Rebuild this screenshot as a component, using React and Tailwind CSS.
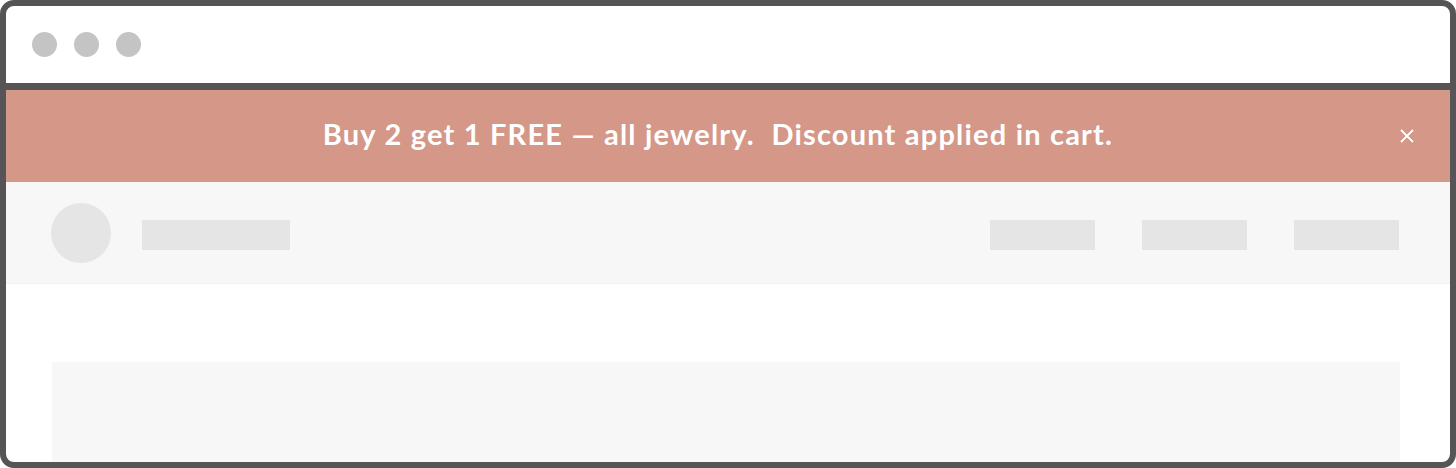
import React from 'react';

const Bar = ({ className }) => <div className={`mt-[4px] h-[30px] bg-[#e5e5e5] ${className}`} />;

export default function App() {
  return (
    <div className="h-[468px] w-[1456px] bg-white">
      <div className="flex h-full flex-col overflow-hidden rounded-[14px] border-[6px] border-[#555555] bg-white">
        {/* window chrome */}
        <div className="flex h-[84px] shrink-0 items-center gap-[17px] border-b-[7px] border-[#555555] pl-[26px] pb-[1px]">
          <span className="h-[25px] w-[25px] rounded-full bg-[#c4c4c4]" />
          <span className="h-[25px] w-[25px] rounded-full bg-[#c4c4c4]" />
          <span className="h-[25px] w-[25px] rounded-full bg-[#c4c4c4]" />
        </div>

        {/* promo banner */}
        <div className="relative flex h-[92px] shrink-0 items-center justify-center bg-[#d49788]">
          <p className="mb-[4px] mr-[20px] whitespace-pre font-['Lato',sans-serif] text-[29px] font-bold tracking-[1.2px] text-white">
            {'Buy 2 get 1 FREE — all jewelry.  Discount applied in cart.'}
          </p>
          <button className="absolute right-[35px] top-1/2 -translate-y-1/2 text-white" aria-label="Close">
            <svg width="16" height="16" viewBox="0 0 16 16" fill="none" stroke="currentColor" strokeWidth="1.8">
              <path d="M2 2l12 12M14 2L2 14" />
            </svg>
          </button>
        </div>

        {/* header placeholder */}
        <div className="flex h-[102px] shrink-0 items-center justify-between border-b border-[#f0f0f0] bg-[#f7f7f7] pl-[45px] pr-[51px]">
          <div className="flex items-center gap-[31px]">
            <div className="h-[60px] w-[60px] rounded-full bg-[#e5e5e5]" />
            <Bar className="w-[148px]" />
          </div>
          <nav className="flex gap-[47px]">
            <Bar className="w-[105px]" />
            <Bar className="w-[105px]" />
            <Bar className="w-[105px]" />
          </nav>
        </div>

        {/* content placeholder */}
        <div className="flex-1 pl-[46px] pr-[50px] pt-[78px]">
          <div className="h-full bg-[#f7f7f7]" />
        </div>
      </div>
    </div>
  );
}
